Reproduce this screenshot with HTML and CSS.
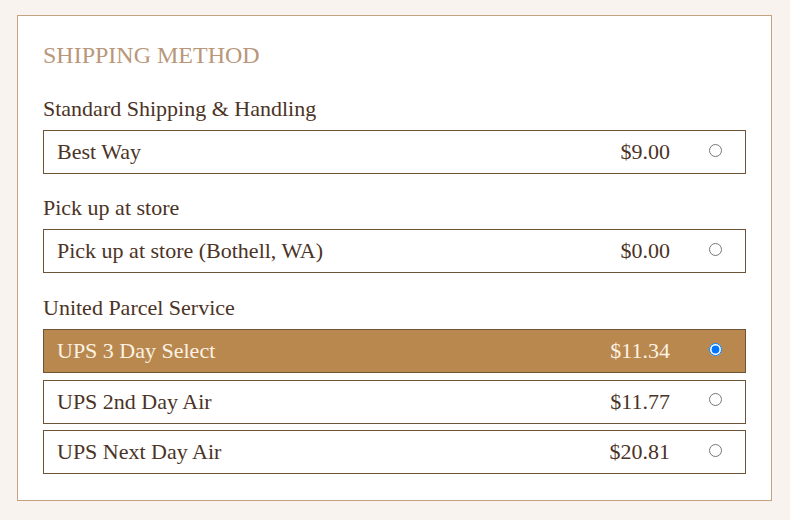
FILE: index.html
```html
<!DOCTYPE html>
<html>
<head>
<meta charset="utf-8">
<link rel="stylesheet" href="styles.css">
</head>
<body>
<div class="panel">
  <h2 class="title">SHIPPING METHOD</h2>
  <div class="group">
    <div class="group-label">Standard Shipping &amp; Handling</div>
    <div class="options">
      <label class="option"><span class="name">Best Way</span><span class="price">$9.00</span><input class="radio" type="radio" name="ship"></label>
    </div>
  </div>
  <div class="group">
    <div class="group-label">Pick up at store</div>
    <div class="options">
      <label class="option"><span class="name">Pick up at store (Bothell, WA)</span><span class="price">$0.00</span><input class="radio" type="radio" name="ship"></label>
    </div>
  </div>
  <div class="group">
    <div class="group-label">United Parcel Service</div>
    <div class="options">
      <label class="option selected"><span class="name">UPS 3 Day Select</span><span class="price">$11.34</span><input class="radio" type="radio" name="ship" checked></label>
      <label class="option"><span class="name">UPS 2nd Day Air</span><span class="price">$11.77</span><input class="radio" type="radio" name="ship"></label>
      <label class="option"><span class="name">UPS Next Day Air</span><span class="price">$20.81</span><input class="radio" type="radio" name="ship"></label>
    </div>
  </div>
</div>
</body>
</html>
```
FILE: styles.css
```css
html, body {
  margin: 0;
  padding: 0;
  background: #f8f3ef;
}
body {
  padding-top: 15px;
  font-family: "Liberation Serif", "Times New Roman", serif;
  color: #4b3326;
}
.panel {
  box-sizing: border-box;
  width: 755px;
  margin-left: 17px;
  background: #ffffff;
  border: 1px solid #c4a27f;
  padding: 24px 25px 26px 25px;
}
.title {
  margin: 0;
  font-size: 24px;
  line-height: 30px;
  font-weight: normal;
  color: #b9977a;
}
.group {
  margin-top: 20px;
}
.group:first-of-type {
  margin-top: 25px;
}
.group:last-of-type {
  margin-top: 21px;
}
.group-label {
  font-size: 22px;
  line-height: 28px;
  margin-bottom: 7px;
}
.options {
  display: flex;
  flex-direction: column;
  gap: 6.5px;
}
.option {
  box-sizing: border-box;
  height: 44px;
  display: flex;
  align-items: center;
  border: 1px solid #6e5436;
  padding-left: 13px;
  font-size: 22px;
  line-height: 42px;
  background: #ffffff;
}
.option.selected {
  background: #b9884f;
  color: #fcf2e3;
}
.name {
  flex: 1;
}
.radio {
  width: 13px;
  height: 13px;
  margin: 0 23px 0 39px;
  position: relative;
  top: -2px;
}
```
